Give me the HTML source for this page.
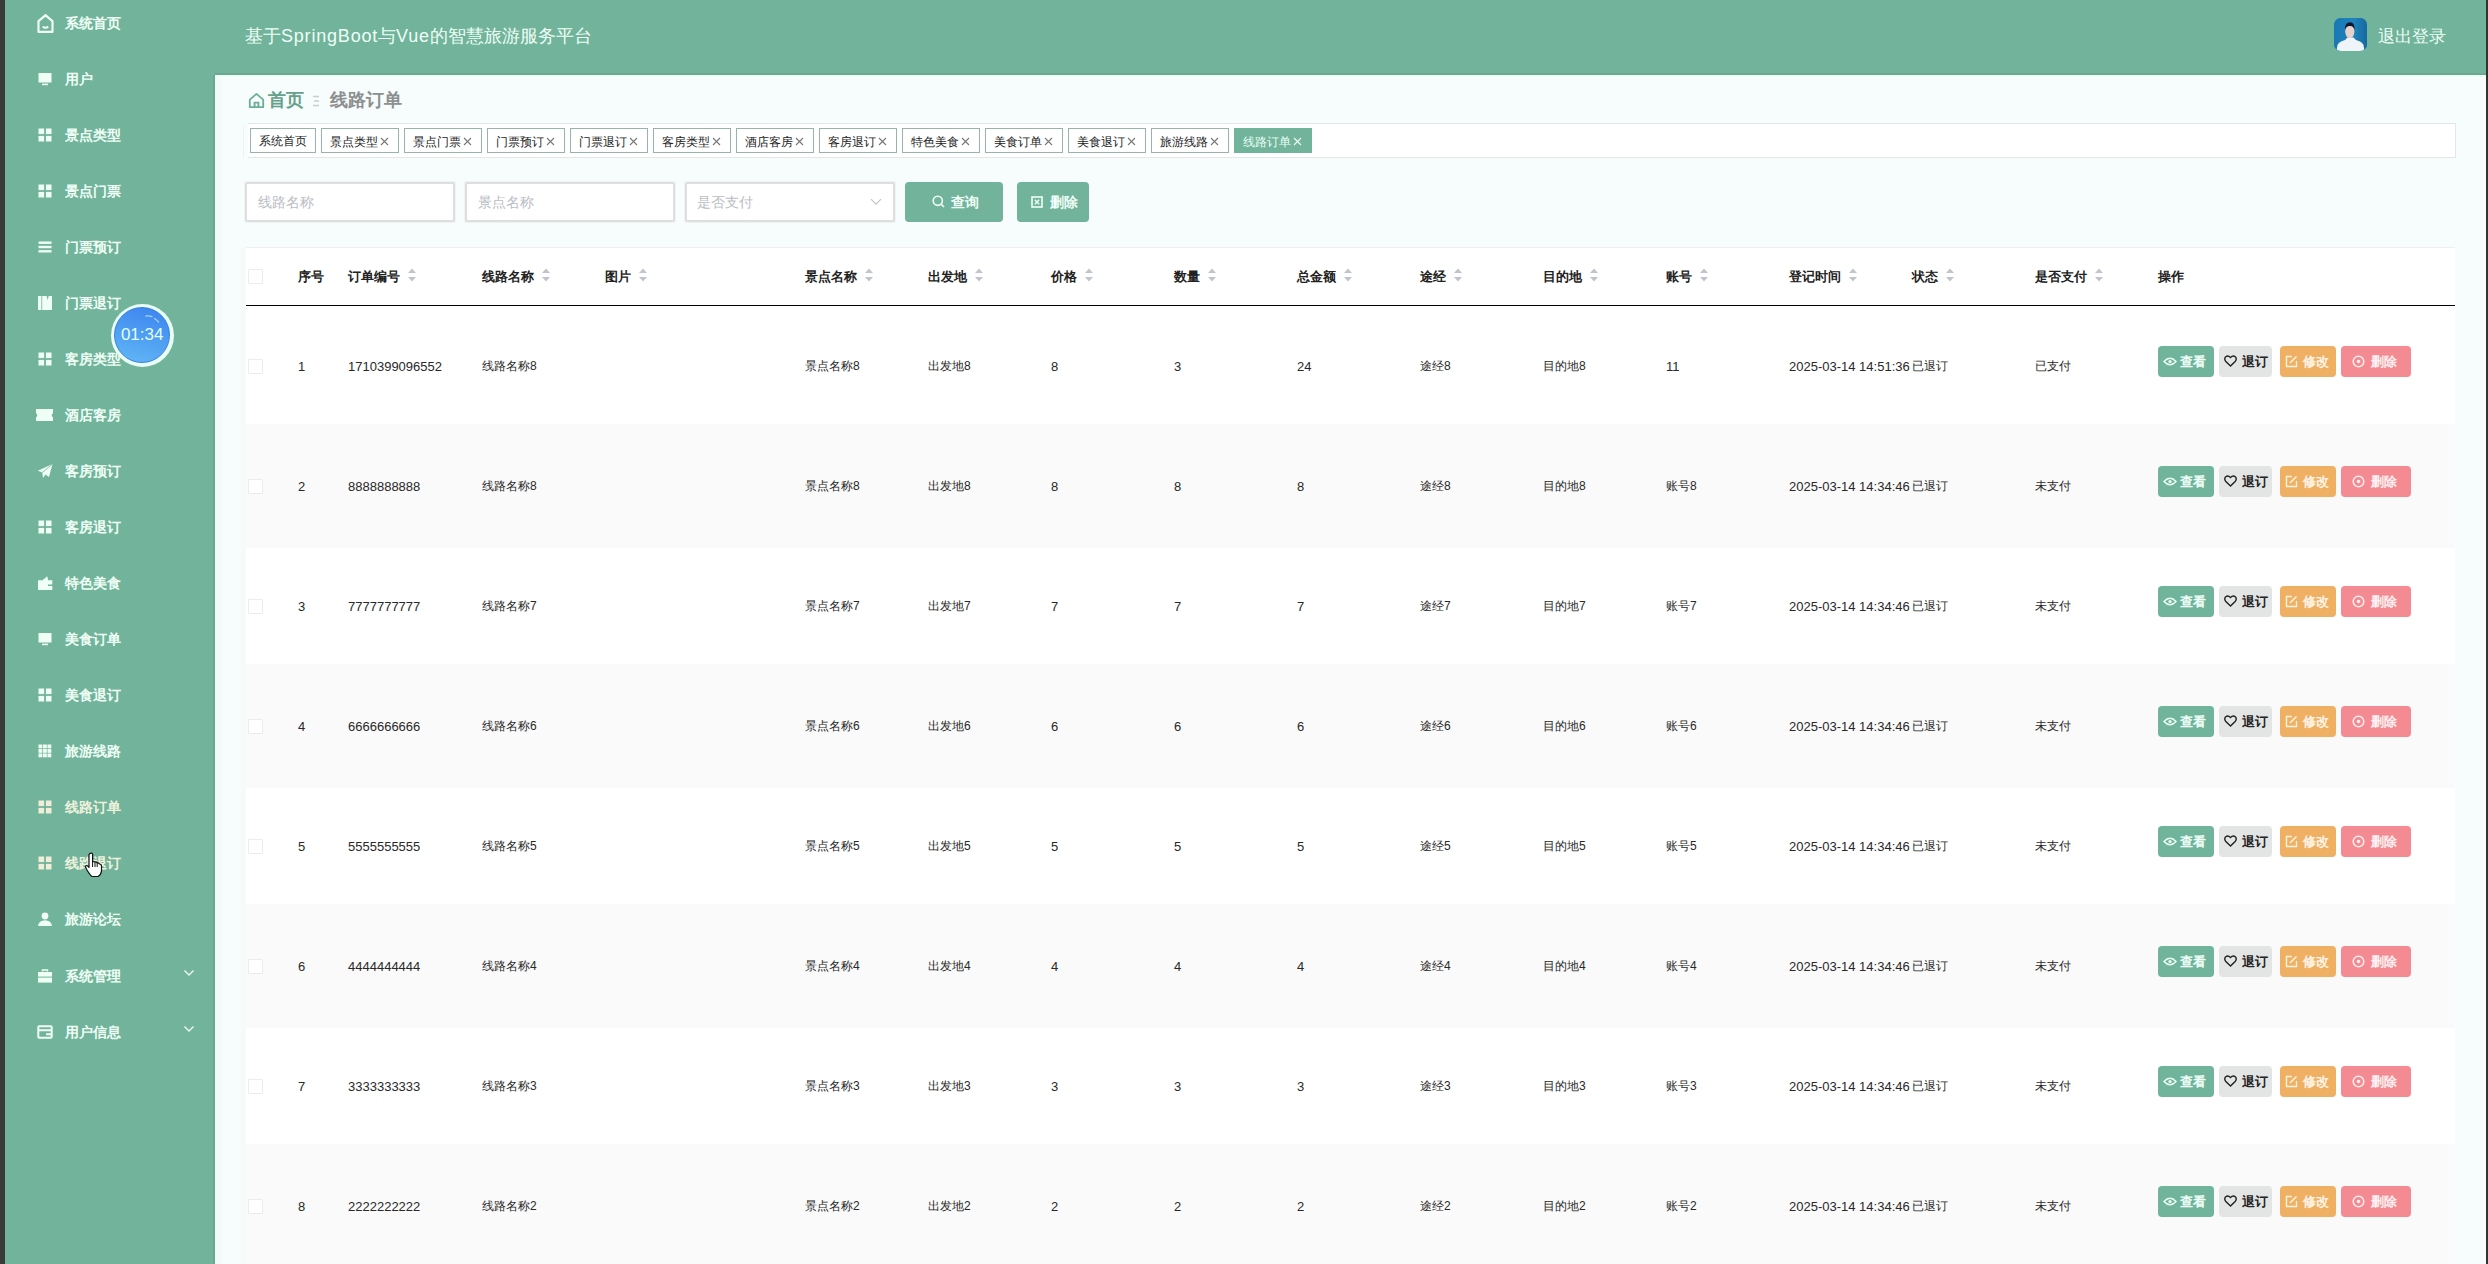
<!DOCTYPE html><html><head><meta charset="utf-8"><style>
*{box-sizing:border-box;margin:0;padding:0}
svg{display:block}
html,body{width:2488px;height:1264px;overflow:hidden}
body{position:relative;background:#f6fcfb;font-family:"Liberation Sans",sans-serif;color:#333}
.a{position:absolute}
.edgeL{left:0;top:0;width:5px;height:1264px;background:#373a38}
.edgeR{left:2486px;top:0;width:2px;height:1264px;background:#333}
.side{left:5px;top:0;width:210px;height:1264px;background:#72b39b}
.head{left:215px;top:0;width:2271px;height:75px;background:#72b39b}
.title{left:245px;top:23px;font-size:18px;color:#eefff6;white-space:nowrap;line-height:26px}
.logout{left:2378px;top:25px;font-size:16.5px;color:#eefff6;white-space:nowrap;line-height:22px}
.avatar{left:2334px;top:18px;width:33px;height:33px;border-radius:7px;overflow:hidden;background:#1b7fb5}
.mi{left:65px;font-size:14px;font-weight:bold;color:#effff6;white-space:nowrap;line-height:16px}
.mi.act{color:#eef2dc}
.ic{left:37px;width:16px;height:16px}
.chev{left:183px;width:12px;height:8px}
.bc{font-size:18px;font-weight:bold;white-space:nowrap;line-height:22px}
.tabs{left:248px;top:123px;width:2208px;height:35px;border:1px solid #e3e8e7;border-left:none;background:#fff}
.tab{top:128px;height:25px;border:1px solid #98b3aa;background:#fff;font-size:12px;color:#222;line-height:25px;white-space:nowrap;padding-left:8px}
.tab .x{font-size:13px;color:#888;margin-left:0px}
.tab.on{background:#72b39b;border-color:#72b39b;color:#e9fff5}
.tab.on .x{color:#e9fff5}
.inp{top:182px;height:40px;border:2px solid #dddfdf;border-radius:2px;box-shadow:0 0 0 1px #f1f3f3;background:#fff;font-size:14px;color:#babdc3;line-height:36px;padding-left:11px;white-space:nowrap}
.btn{top:182px;height:40px;border-radius:4px;background:#72b39b;color:#f0fff8;font-size:14px;line-height:40px;white-space:nowrap}
.tbl{left:246px;top:247px;width:2209px;height:1017px;background:#fff}
.hline{left:246px;top:305px;width:2209px;height:1px;background:#000}
.th{top:269px;font-size:13px;font-weight:bold;color:#222;white-space:nowrap;line-height:16px}
.td{font-size:12px;color:#282828;white-space:nowrap;line-height:16px}
.stripe{left:246px;width:2209px;height:120px;background:#fafafa}
.cb{left:248px;width:15px;height:15px;border:1px solid #ececec;border-radius:1px;background:#fff}
.sort{width:10px;height:16px}
.ob{height:31px;border-radius:4px;font-size:13px;font-weight:bold;line-height:31px;white-space:nowrap;padding-left:6px}
.ob svg{vertical-align:-2px;margin-right:3px}
.clock{left:110.6px;top:303.6px;width:63.2px;height:63.2px;border-radius:50%;background:#e9fdf7;padding:3.6px}
.clock div{position:relative;width:56px;height:56px;border-radius:50%;border:1px solid #3a7fe0;background:linear-gradient(195deg,#3b82f0 0%,#4a98f2 40%,#62b8f5 100%);color:#e2fff6;font-size:17px;text-align:center;line-height:54px}
.td.n{font-size:13px;margin-top:1px}.stripe{height:124px}</style></head><body><div class="a edgeL"></div><div class="a side"></div><div class="a head"></div><div class="a edgeR"></div><div class="a ic" style="top:14px;"><svg width="17" height="19" viewBox="0 0 16 16" preserveAspectRatio="none"><path d="M8 1 L14.6 6 V15 H1.4 V6 Z" fill="none" stroke="#effff6" stroke-width="2" stroke-linejoin="round"/><path d="M5.4 10.6 Q8 12.6 10.6 10.6" fill="none" stroke="#effff6" stroke-width="1.8"/></svg></div><div class="a mi" style="top:15px">系统首页</div><div class="a ic" style="top:71px;"><svg width="16" height="16" viewBox="0 0 16 16" ><rect x="1.5" y="2" width="13" height="9.5" fill="#effff6"/><rect x="5" y="12.6" width="6" height="1.6" fill="#effff6"/></svg></div><div class="a mi" style="top:71px">用户</div><div class="a ic" style="top:127px;"><svg width="16" height="16" viewBox="0 0 16 16" ><rect x="1.5" y="1.5" width="5.6" height="5.6" fill="#effff6"/><rect x="8.9" y="1.5" width="5.6" height="5.6" fill="#effff6"/><rect x="1.5" y="8.9" width="5.6" height="5.6" fill="#effff6"/><rect x="8.9" y="8.9" width="5.6" height="5.6" fill="#effff6"/></svg></div><div class="a mi" style="top:127px">景点类型</div><div class="a ic" style="top:183px;"><svg width="16" height="16" viewBox="0 0 16 16" ><rect x="1.5" y="1.5" width="5.6" height="5.6" fill="#effff6"/><rect x="8.9" y="1.5" width="5.6" height="5.6" fill="#effff6"/><rect x="1.5" y="8.9" width="5.6" height="5.6" fill="#effff6"/><rect x="8.9" y="8.9" width="5.6" height="5.6" fill="#effff6"/></svg></div><div class="a mi" style="top:183px">景点门票</div><div class="a ic" style="top:239px;"><svg width="16" height="16" viewBox="0 0 16 16" ><rect x="1.5" y="2.5" width="13" height="2.4" fill="#effff6"/><rect x="1.5" y="6.8" width="13" height="2.4" fill="#effff6"/><rect x="1.5" y="11.1" width="13" height="2.4" fill="#effff6"/></svg></div><div class="a mi" style="top:239px">门票预订</div><div class="a ic" style="top:295px;"><svg width="16" height="16" viewBox="0 0 16 16" ><rect x="1" y="1" width="3.4" height="14" fill="#effff6"/><path d="M5.2 1 H15 V15 H5.2 Z M9.6 1 L11.6 1 L10.8 5.2 Z" fill="#effff6" fill-rule="evenodd"/></svg></div><div class="a mi" style="top:295px">门票退订</div><div class="a ic" style="top:351px;"><svg width="16" height="16" viewBox="0 0 16 16" ><rect x="1.5" y="1.5" width="5.6" height="5.6" fill="#effff6"/><rect x="8.9" y="1.5" width="5.6" height="5.6" fill="#effff6"/><rect x="1.5" y="8.9" width="5.6" height="5.6" fill="#effff6"/><rect x="8.9" y="8.9" width="5.6" height="5.6" fill="#effff6"/></svg></div><div class="a mi" style="top:351px">客房类型</div><div class="a ic" style="top:407px;left:36px;width:18px"><svg width="17" height="16" viewBox="0 0 17 16" ><path d="M0 2 H17 V6.2 A2.2 2.2 0 0 0 17 10.2 V14 H0 V10.2 A2.2 2.2 0 0 0 0 6.2 Z" fill="#effff6"/></svg></div><div class="a mi" style="top:407px">酒店客房</div><div class="a ic" style="top:463px;"><svg width="16" height="16" viewBox="0 0 16 16" ><path d="M15.5 1 L0.8 7.8 L5.2 9.6 L6 15 L8.6 11.4 L12 14 Z" fill="#effff6"/><path d="M5.2 9.6 L15.5 1" stroke="#72b39b" stroke-width="0.8"/></svg></div><div class="a mi" style="top:463px">客房预订</div><div class="a ic" style="top:519px;"><svg width="16" height="16" viewBox="0 0 16 16" ><rect x="1.5" y="1.5" width="5.6" height="5.6" fill="#effff6"/><rect x="8.9" y="1.5" width="5.6" height="5.6" fill="#effff6"/><rect x="1.5" y="8.9" width="5.6" height="5.6" fill="#effff6"/><rect x="8.9" y="8.9" width="5.6" height="5.6" fill="#effff6"/></svg></div><div class="a mi" style="top:519px">客房退订</div><div class="a ic" style="top:575px;"><svg width="16" height="16" viewBox="0 0 16 16" ><path d="M1 5.2 H5.5 L10.2 1.2 L11.2 5.2 H15.3 V9.6 H11 V11 H15.3 V15 H1 Z" fill="#effff6"/></svg></div><div class="a mi" style="top:575px">特色美食</div><div class="a ic" style="top:631px;"><svg width="16" height="16" viewBox="0 0 16 16" ><rect x="1.5" y="2" width="13" height="9.5" fill="#effff6"/><rect x="5" y="12.6" width="6" height="1.6" fill="#effff6"/></svg></div><div class="a mi" style="top:631px">美食订单</div><div class="a ic" style="top:687px;"><svg width="16" height="16" viewBox="0 0 16 16" ><rect x="1.5" y="1.5" width="5.6" height="5.6" fill="#effff6"/><rect x="8.9" y="1.5" width="5.6" height="5.6" fill="#effff6"/><rect x="1.5" y="8.9" width="5.6" height="5.6" fill="#effff6"/><rect x="8.9" y="8.9" width="5.6" height="5.6" fill="#effff6"/></svg></div><div class="a mi" style="top:687px">美食退订</div><div class="a ic" style="top:743px;"><svg width="16" height="16" viewBox="0 0 16 16" ><rect x="1.5" y="1.5" width="3.8" height="3.8" fill="#effff6"/><rect x="1.5" y="6.0" width="3.8" height="3.8" fill="#effff6"/><rect x="1.5" y="10.5" width="3.8" height="3.8" fill="#effff6"/><rect x="6.0" y="1.5" width="3.8" height="3.8" fill="#effff6"/><rect x="6.0" y="6.0" width="3.8" height="3.8" fill="#effff6"/><rect x="6.0" y="10.5" width="3.8" height="3.8" fill="#effff6"/><rect x="10.5" y="1.5" width="3.8" height="3.8" fill="#effff6"/><rect x="10.5" y="6.0" width="3.8" height="3.8" fill="#effff6"/><rect x="10.5" y="10.5" width="3.8" height="3.8" fill="#effff6"/></svg></div><div class="a mi" style="top:743px">旅游线路</div><div class="a ic" style="top:799px;"><svg width="16" height="16" viewBox="0 0 16 16" ><rect x="1.5" y="1.5" width="5.6" height="5.6" fill="#f1eed8"/><rect x="8.9" y="1.5" width="5.6" height="5.6" fill="#f1eed8"/><rect x="1.5" y="8.9" width="5.6" height="5.6" fill="#f1eed8"/><rect x="8.9" y="8.9" width="5.6" height="5.6" fill="#f1eed8"/></svg></div><div class="a mi act" style="top:799px">线路订单</div><div class="a ic" style="top:855px;"><svg width="16" height="16" viewBox="0 0 16 16" ><rect x="1.5" y="1.5" width="5.6" height="5.6" fill="#f1eed8"/><rect x="8.9" y="1.5" width="5.6" height="5.6" fill="#f1eed8"/><rect x="1.5" y="8.9" width="5.6" height="5.6" fill="#f1eed8"/><rect x="8.9" y="8.9" width="5.6" height="5.6" fill="#f1eed8"/></svg></div><div class="a mi act" style="top:855px">线路退订</div><div class="a ic" style="top:911px;"><svg width="16" height="16" viewBox="0 0 16 16" ><circle cx="8" cy="5" r="3.4" fill="#effff6"/><path d="M1 15 Q1.8 9.5 8 9.3 Q14.2 9.5 15 15 Z" fill="#effff6"/></svg></div><div class="a mi" style="top:911px">旅游论坛</div><div class="a ic" style="top:968px;"><svg width="16" height="16" viewBox="0 0 16 16" ><path d="M5.5 3.5 V2 H10.5 V3.5" fill="none" stroke="#effff6" stroke-width="1.4"/><rect x="1" y="4" width="14" height="4.6" fill="#effff6"/><rect x="1" y="9.6" width="14" height="5" fill="#effff6"/></svg></div><div class="a mi" style="top:968px">系统管理</div><div class="a chev" style="top:969px"><svg width="12" height="8" viewBox="0 0 12 8"><path d="M1.5 1.5 L6 6 L10.5 1.5" fill="none" stroke="#effff6" stroke-width="1.3"/></svg></div><div class="a ic" style="top:1024px;"><svg width="16" height="16" viewBox="0 0 16 16" ><rect x="1.3" y="2.3" width="13.4" height="11.4" rx="1" fill="none" stroke="#effff6" stroke-width="2"/><path d="M1.3 6.2 H14.7 M9 10.2 H14.7" stroke="#effff6" stroke-width="2"/></svg></div><div class="a mi" style="top:1024px">用户信息</div><div class="a chev" style="top:1025px"><svg width="12" height="8" viewBox="0 0 12 8"><path d="M1.5 1.5 L6 6 L10.5 1.5" fill="none" stroke="#effff6" stroke-width="1.3"/></svg></div><div class="a title">基于<span style="letter-spacing:0.8px">SpringBoot</span>与<span style="letter-spacing:0.8px">Vue</span>的智慧旅游服务平台</div><div class="a avatar"><svg width="33" height="33" viewBox="0 0 33 33"><defs><linearGradient id="avg" x1="0" y1="0" x2="1" y2="0"><stop offset="0" stop-color="#1a78b4"/><stop offset="0.6" stop-color="#1f84bd"/><stop offset="1" stop-color="#16679f"/></linearGradient></defs><rect width="33" height="33" fill="url(#avg)"/><path d="M2.5 33 L3.5 27 Q5 23.5 11 22 L13.5 19.5 H19.5 L22 22 Q28 23.5 29.5 27 L30.5 33 Z" fill="#eef4f8"/><ellipse cx="15.8" cy="13.5" rx="4.6" ry="6.6" fill="#e8d3cc"/><path d="M11 12 Q10.6 4.5 16 4.2 Q21 4.5 20.6 12 Q19.5 7.8 16 8 Q12.2 7.8 11 12Z" fill="#101830"/></svg></div><div class="a logout">退出登录</div><div class="a" style="left:215px;top:75px;width:2271px;height:1189px;background:#f7fcfc"></div><div class="a" style="left:213px;top:75px;width:2px;height:1189px;background:#6ca891"></div><div class="a" style="left:215px;top:73px;width:2271px;height:2px;background:#6ca891"></div><div class="a" style="left:215px;top:75px;width:2271px;height:2px;background:#eafff7"></div><div class="a" style="left:215px;top:77px;width:6px;height:1187px;background:#f4faf9"></div><div class="a" style="left:248px;top:92px"><svg width="17" height="17" viewBox="0 0 16 16"><path d="M8 1.8 L14.3 7.2 V14.3 H1.7 V7.2 Z" fill="none" stroke="#6fae96" stroke-width="1.7" stroke-linejoin="round"/><path d="M6.2 14.3 V10 H9.8 V14.3" fill="none" stroke="#6fae96" stroke-width="1.8"/></svg></div><div class="a bc" style="left:268px;top:89px;color:#64a18a">首页</div><div class="a" style="left:312px;top:95px;width:8px;height:12px"><svg width="8" height="12" viewBox="0 0 8 12"><path d="M1 1.5 H7 M2 6 H7 M1 10.5 H7" stroke="#c8cccc" stroke-width="1.3"/></svg></div><div class="a bc" style="left:330px;top:89px;color:#8c8f8f">线路订单</div><div class="a tabs"></div><div class="a" style="left:243px;top:125px;width:1px;height:33px;background:#eef2f1"></div><div class="a tab" style="left:250px;width:66px">系统首页</div><div class="a tab" style="left:321px;width:78px">景点类型<span class="x"><svg style="display:inline-block;vertical-align:0px;margin-left:2px" width="9" height="9" viewBox="0 0 9 9"><path d="M1 1 L8 8 M8 1 L1 8" stroke="#777" stroke-width="1.1"/></svg></span></div><div class="a tab" style="left:404px;width:78px">景点门票<span class="x"><svg style="display:inline-block;vertical-align:0px;margin-left:2px" width="9" height="9" viewBox="0 0 9 9"><path d="M1 1 L8 8 M8 1 L1 8" stroke="#777" stroke-width="1.1"/></svg></span></div><div class="a tab" style="left:487px;width:78px">门票预订<span class="x"><svg style="display:inline-block;vertical-align:0px;margin-left:2px" width="9" height="9" viewBox="0 0 9 9"><path d="M1 1 L8 8 M8 1 L1 8" stroke="#777" stroke-width="1.1"/></svg></span></div><div class="a tab" style="left:570px;width:78px">门票退订<span class="x"><svg style="display:inline-block;vertical-align:0px;margin-left:2px" width="9" height="9" viewBox="0 0 9 9"><path d="M1 1 L8 8 M8 1 L1 8" stroke="#777" stroke-width="1.1"/></svg></span></div><div class="a tab" style="left:653px;width:78px">客房类型<span class="x"><svg style="display:inline-block;vertical-align:0px;margin-left:2px" width="9" height="9" viewBox="0 0 9 9"><path d="M1 1 L8 8 M8 1 L1 8" stroke="#777" stroke-width="1.1"/></svg></span></div><div class="a tab" style="left:736px;width:78px">酒店客房<span class="x"><svg style="display:inline-block;vertical-align:0px;margin-left:2px" width="9" height="9" viewBox="0 0 9 9"><path d="M1 1 L8 8 M8 1 L1 8" stroke="#777" stroke-width="1.1"/></svg></span></div><div class="a tab" style="left:819px;width:78px">客房退订<span class="x"><svg style="display:inline-block;vertical-align:0px;margin-left:2px" width="9" height="9" viewBox="0 0 9 9"><path d="M1 1 L8 8 M8 1 L1 8" stroke="#777" stroke-width="1.1"/></svg></span></div><div class="a tab" style="left:902px;width:78px">特色美食<span class="x"><svg style="display:inline-block;vertical-align:0px;margin-left:2px" width="9" height="9" viewBox="0 0 9 9"><path d="M1 1 L8 8 M8 1 L1 8" stroke="#777" stroke-width="1.1"/></svg></span></div><div class="a tab" style="left:985px;width:78px">美食订单<span class="x"><svg style="display:inline-block;vertical-align:0px;margin-left:2px" width="9" height="9" viewBox="0 0 9 9"><path d="M1 1 L8 8 M8 1 L1 8" stroke="#777" stroke-width="1.1"/></svg></span></div><div class="a tab" style="left:1068px;width:78px">美食退订<span class="x"><svg style="display:inline-block;vertical-align:0px;margin-left:2px" width="9" height="9" viewBox="0 0 9 9"><path d="M1 1 L8 8 M8 1 L1 8" stroke="#777" stroke-width="1.1"/></svg></span></div><div class="a tab" style="left:1151px;width:78px">旅游线路<span class="x"><svg style="display:inline-block;vertical-align:0px;margin-left:2px" width="9" height="9" viewBox="0 0 9 9"><path d="M1 1 L8 8 M8 1 L1 8" stroke="#777" stroke-width="1.1"/></svg></span></div><div class="a tab on" style="left:1234px;width:78px">线路订单<span class="x"><svg style="display:inline-block;vertical-align:0px;margin-left:2px" width="9" height="9" viewBox="0 0 9 9"><path d="M1 1 L8 8 M8 1 L1 8" stroke="#f0fff8" stroke-width="1.1"/></svg></span></div><div class="a inp" style="left:245px;width:210px">线路名称</div><div class="a inp" style="left:465px;width:210px">景点名称</div><div class="a inp" style="left:685px;width:210px;padding-left:10px">是否支付<svg class="a" style="left:183px;top:14px" width="12" height="8" viewBox="0 0 12 8"><path d="M1 1.2 L6 6.2 L11 1.2" fill="none" stroke="#c0c4cc" stroke-width="1.2"/></svg></div><div class="a btn" style="left:905px;width:98px"><svg class="a" style="left:27px;top:13px" width="13" height="13" viewBox="0 0 13 13"><circle cx="5.8" cy="5.8" r="4.6" fill="none" stroke="#f0fff8" stroke-width="1.6"/><path d="M9.2 9.2 L12 12" stroke="#f0fff8" stroke-width="1.6"/></svg><span class="a" style="left:46px;top:0;font-weight:bold">查询</span></div><div class="a btn" style="left:1017px;width:72px;font-weight:bold"><svg class="a" style="left:14px;top:14px" width="12" height="12" viewBox="0 0 12 12"><rect x="1" y="1" width="10" height="10" fill="none" stroke="#f0fff8" stroke-width="1.6"/><path d="M3.8 3.8 L8.2 8.2 M8.2 3.8 L3.8 8.2" stroke="#f0fff8" stroke-width="1.4"/></svg><span class="a" style="left:33px;top:0">删除</span></div><div class="a tbl"></div><div class="a" style="left:241px;top:247px;width:5px;height:1017px;background:#f8f9f9"></div><div class="a" style="left:246px;top:247px;width:2209px;height:1px;background:#eef0f0"></div><div class="a stripe" style="top:424px"></div><div class="a stripe" style="top:664px"></div><div class="a stripe" style="top:904px"></div><div class="a stripe" style="top:1144px"></div><div class="a hline"></div><div class="a cb" style="top:269px"></div><div class="a th" style="left:298px">序号</div><div class="a th" style="left:348px">订单编号<span style="position:absolute;left:100%;margin-left:7px;top:-2px"><svg width="10" height="16" viewBox="0 0 10 16"><path d="M5 1.5 L9 6 H1 Z" fill="#c0c4cc"/><path d="M5 14.5 L9 10 H1 Z" fill="#c0c4cc"/></svg></span></div><div class="a th" style="left:482px">线路名称<span style="position:absolute;left:100%;margin-left:7px;top:-2px"><svg width="10" height="16" viewBox="0 0 10 16"><path d="M5 1.5 L9 6 H1 Z" fill="#c0c4cc"/><path d="M5 14.5 L9 10 H1 Z" fill="#c0c4cc"/></svg></span></div><div class="a th" style="left:605px">图片<span style="position:absolute;left:100%;margin-left:7px;top:-2px"><svg width="10" height="16" viewBox="0 0 10 16"><path d="M5 1.5 L9 6 H1 Z" fill="#c0c4cc"/><path d="M5 14.5 L9 10 H1 Z" fill="#c0c4cc"/></svg></span></div><div class="a th" style="left:805px">景点名称<span style="position:absolute;left:100%;margin-left:7px;top:-2px"><svg width="10" height="16" viewBox="0 0 10 16"><path d="M5 1.5 L9 6 H1 Z" fill="#c0c4cc"/><path d="M5 14.5 L9 10 H1 Z" fill="#c0c4cc"/></svg></span></div><div class="a th" style="left:928px">出发地<span style="position:absolute;left:100%;margin-left:7px;top:-2px"><svg width="10" height="16" viewBox="0 0 10 16"><path d="M5 1.5 L9 6 H1 Z" fill="#c0c4cc"/><path d="M5 14.5 L9 10 H1 Z" fill="#c0c4cc"/></svg></span></div><div class="a th" style="left:1051px">价格<span style="position:absolute;left:100%;margin-left:7px;top:-2px"><svg width="10" height="16" viewBox="0 0 10 16"><path d="M5 1.5 L9 6 H1 Z" fill="#c0c4cc"/><path d="M5 14.5 L9 10 H1 Z" fill="#c0c4cc"/></svg></span></div><div class="a th" style="left:1174px">数量<span style="position:absolute;left:100%;margin-left:7px;top:-2px"><svg width="10" height="16" viewBox="0 0 10 16"><path d="M5 1.5 L9 6 H1 Z" fill="#c0c4cc"/><path d="M5 14.5 L9 10 H1 Z" fill="#c0c4cc"/></svg></span></div><div class="a th" style="left:1297px">总金额<span style="position:absolute;left:100%;margin-left:7px;top:-2px"><svg width="10" height="16" viewBox="0 0 10 16"><path d="M5 1.5 L9 6 H1 Z" fill="#c0c4cc"/><path d="M5 14.5 L9 10 H1 Z" fill="#c0c4cc"/></svg></span></div><div class="a th" style="left:1420px">途经<span style="position:absolute;left:100%;margin-left:7px;top:-2px"><svg width="10" height="16" viewBox="0 0 10 16"><path d="M5 1.5 L9 6 H1 Z" fill="#c0c4cc"/><path d="M5 14.5 L9 10 H1 Z" fill="#c0c4cc"/></svg></span></div><div class="a th" style="left:1543px">目的地<span style="position:absolute;left:100%;margin-left:7px;top:-2px"><svg width="10" height="16" viewBox="0 0 10 16"><path d="M5 1.5 L9 6 H1 Z" fill="#c0c4cc"/><path d="M5 14.5 L9 10 H1 Z" fill="#c0c4cc"/></svg></span></div><div class="a th" style="left:1666px">账号<span style="position:absolute;left:100%;margin-left:7px;top:-2px"><svg width="10" height="16" viewBox="0 0 10 16"><path d="M5 1.5 L9 6 H1 Z" fill="#c0c4cc"/><path d="M5 14.5 L9 10 H1 Z" fill="#c0c4cc"/></svg></span></div><div class="a th" style="left:1789px">登记时间<span style="position:absolute;left:100%;margin-left:7px;top:-2px"><svg width="10" height="16" viewBox="0 0 10 16"><path d="M5 1.5 L9 6 H1 Z" fill="#c0c4cc"/><path d="M5 14.5 L9 10 H1 Z" fill="#c0c4cc"/></svg></span></div><div class="a th" style="left:1912px">状态<span style="position:absolute;left:100%;margin-left:7px;top:-2px"><svg width="10" height="16" viewBox="0 0 10 16"><path d="M5 1.5 L9 6 H1 Z" fill="#c0c4cc"/><path d="M5 14.5 L9 10 H1 Z" fill="#c0c4cc"/></svg></span></div><div class="a th" style="left:2035px">是否支付<span style="position:absolute;left:100%;margin-left:7px;top:-2px"><svg width="10" height="16" viewBox="0 0 10 16"><path d="M5 1.5 L9 6 H1 Z" fill="#c0c4cc"/><path d="M5 14.5 L9 10 H1 Z" fill="#c0c4cc"/></svg></span></div><div class="a th" style="left:2158px">操作</div><div class="a cb" style="top:358.5px"></div><div class="a td n" style="left:298px;top:358.0px">1</div><div class="a td n" style="left:348px;top:358.0px">1710399096552</div><div class="a td" style="left:482px;top:358.0px">线路名称8</div><div class="a td" style="left:805px;top:358.0px">景点名称8</div><div class="a td" style="left:928px;top:358.0px">出发地8</div><div class="a td n" style="left:1051px;top:358.0px">8</div><div class="a td n" style="left:1174px;top:358.0px">3</div><div class="a td n" style="left:1297px;top:358.0px">24</div><div class="a td" style="left:1420px;top:358.0px">途经8</div><div class="a td" style="left:1543px;top:358.0px">目的地8</div><div class="a td n" style="left:1666px;top:358.0px">11</div><div class="a td n" style="left:1789px;top:358.0px">2025-03-14 14:51:36</div><div class="a td" style="left:1912px;top:358.0px">已退订</div><div class="a td" style="left:2035px;top:358.0px">已支付</div><div class="a" style="left:0;top:345.5px;width:0;height:0"><div class="a ob" style="left:2158px;width:56px;background:#6fb49b;color:#effff7"><svg class="a" style="left:5px;top:10px" width="14" height="11" viewBox="0 0 14 11"><path d="M1 5.5 Q7 -1 13 5.5 Q7 12 1 5.5 Z" fill="none" stroke="#eefff7" stroke-width="1.5"/><circle cx="7" cy="5.5" r="1.6" fill="#eefff7"/></svg><span class="a" style="left:22px;top:0">查看</span></div><div class="a ob" style="left:2219px;width:53px;background:#e3e4e4;color:#222"><svg class="a" style="left:5px;top:9px" width="13" height="12" viewBox="0 0 13 12"><path d="M6.5 11 L1.6 6.2 Q-0.2 3.8 1.8 1.8 Q4 0 6.5 2.6 Q9 0 11.2 1.8 Q13.2 3.8 11.4 6.2 Z" fill="none" stroke="#222" stroke-width="1.4"/></svg><span class="a" style="left:23px;top:0">退订</span></div><div class="a ob" style="left:2280px;width:56px;background:#f0b064;color:#fff4e4"><svg class="a" style="left:5px;top:9px" width="13" height="13" viewBox="0 0 13 13"><path d="M7 1.5 H1.5 V11.5 H11.5 V6" fill="none" stroke="#fff3e0" stroke-width="1.4"/><path d="M5 8 L11.5 1.5" stroke="#fff3e0" stroke-width="1.6"/></svg><span class="a" style="left:23px;top:0">修改</span></div><div class="a ob" style="left:2341px;width:70px;background:#f58b92;color:#fff2f2"><svg class="a" style="left:11px;top:9px" width="13" height="13" viewBox="0 0 13 13"><circle cx="6.5" cy="6.5" r="5.3" fill="none" stroke="#fff0f0" stroke-width="1.5"/><circle cx="6.5" cy="6.5" r="1.8" fill="#fff0f0"/></svg><span class="a" style="left:30px;top:0">删除</span></div></div><div class="a cb" style="top:478.5px"></div><div class="a td n" style="left:298px;top:478.0px">2</div><div class="a td n" style="left:348px;top:478.0px">8888888888</div><div class="a td" style="left:482px;top:478.0px">线路名称8</div><div class="a td" style="left:805px;top:478.0px">景点名称8</div><div class="a td" style="left:928px;top:478.0px">出发地8</div><div class="a td n" style="left:1051px;top:478.0px">8</div><div class="a td n" style="left:1174px;top:478.0px">8</div><div class="a td n" style="left:1297px;top:478.0px">8</div><div class="a td" style="left:1420px;top:478.0px">途经8</div><div class="a td" style="left:1543px;top:478.0px">目的地8</div><div class="a td" style="left:1666px;top:478.0px">账号8</div><div class="a td n" style="left:1789px;top:478.0px">2025-03-14 14:34:46</div><div class="a td" style="left:1912px;top:478.0px">已退订</div><div class="a td" style="left:2035px;top:478.0px">未支付</div><div class="a" style="left:0;top:465.5px;width:0;height:0"><div class="a ob" style="left:2158px;width:56px;background:#6fb49b;color:#effff7"><svg class="a" style="left:5px;top:10px" width="14" height="11" viewBox="0 0 14 11"><path d="M1 5.5 Q7 -1 13 5.5 Q7 12 1 5.5 Z" fill="none" stroke="#eefff7" stroke-width="1.5"/><circle cx="7" cy="5.5" r="1.6" fill="#eefff7"/></svg><span class="a" style="left:22px;top:0">查看</span></div><div class="a ob" style="left:2219px;width:53px;background:#e3e4e4;color:#222"><svg class="a" style="left:5px;top:9px" width="13" height="12" viewBox="0 0 13 12"><path d="M6.5 11 L1.6 6.2 Q-0.2 3.8 1.8 1.8 Q4 0 6.5 2.6 Q9 0 11.2 1.8 Q13.2 3.8 11.4 6.2 Z" fill="none" stroke="#222" stroke-width="1.4"/></svg><span class="a" style="left:23px;top:0">退订</span></div><div class="a ob" style="left:2280px;width:56px;background:#f0b064;color:#fff4e4"><svg class="a" style="left:5px;top:9px" width="13" height="13" viewBox="0 0 13 13"><path d="M7 1.5 H1.5 V11.5 H11.5 V6" fill="none" stroke="#fff3e0" stroke-width="1.4"/><path d="M5 8 L11.5 1.5" stroke="#fff3e0" stroke-width="1.6"/></svg><span class="a" style="left:23px;top:0">修改</span></div><div class="a ob" style="left:2341px;width:70px;background:#f58b92;color:#fff2f2"><svg class="a" style="left:11px;top:9px" width="13" height="13" viewBox="0 0 13 13"><circle cx="6.5" cy="6.5" r="5.3" fill="none" stroke="#fff0f0" stroke-width="1.5"/><circle cx="6.5" cy="6.5" r="1.8" fill="#fff0f0"/></svg><span class="a" style="left:30px;top:0">删除</span></div></div><div class="a cb" style="top:598.5px"></div><div class="a td n" style="left:298px;top:598.0px">3</div><div class="a td n" style="left:348px;top:598.0px">7777777777</div><div class="a td" style="left:482px;top:598.0px">线路名称7</div><div class="a td" style="left:805px;top:598.0px">景点名称7</div><div class="a td" style="left:928px;top:598.0px">出发地7</div><div class="a td n" style="left:1051px;top:598.0px">7</div><div class="a td n" style="left:1174px;top:598.0px">7</div><div class="a td n" style="left:1297px;top:598.0px">7</div><div class="a td" style="left:1420px;top:598.0px">途经7</div><div class="a td" style="left:1543px;top:598.0px">目的地7</div><div class="a td" style="left:1666px;top:598.0px">账号7</div><div class="a td n" style="left:1789px;top:598.0px">2025-03-14 14:34:46</div><div class="a td" style="left:1912px;top:598.0px">已退订</div><div class="a td" style="left:2035px;top:598.0px">未支付</div><div class="a" style="left:0;top:585.5px;width:0;height:0"><div class="a ob" style="left:2158px;width:56px;background:#6fb49b;color:#effff7"><svg class="a" style="left:5px;top:10px" width="14" height="11" viewBox="0 0 14 11"><path d="M1 5.5 Q7 -1 13 5.5 Q7 12 1 5.5 Z" fill="none" stroke="#eefff7" stroke-width="1.5"/><circle cx="7" cy="5.5" r="1.6" fill="#eefff7"/></svg><span class="a" style="left:22px;top:0">查看</span></div><div class="a ob" style="left:2219px;width:53px;background:#e3e4e4;color:#222"><svg class="a" style="left:5px;top:9px" width="13" height="12" viewBox="0 0 13 12"><path d="M6.5 11 L1.6 6.2 Q-0.2 3.8 1.8 1.8 Q4 0 6.5 2.6 Q9 0 11.2 1.8 Q13.2 3.8 11.4 6.2 Z" fill="none" stroke="#222" stroke-width="1.4"/></svg><span class="a" style="left:23px;top:0">退订</span></div><div class="a ob" style="left:2280px;width:56px;background:#f0b064;color:#fff4e4"><svg class="a" style="left:5px;top:9px" width="13" height="13" viewBox="0 0 13 13"><path d="M7 1.5 H1.5 V11.5 H11.5 V6" fill="none" stroke="#fff3e0" stroke-width="1.4"/><path d="M5 8 L11.5 1.5" stroke="#fff3e0" stroke-width="1.6"/></svg><span class="a" style="left:23px;top:0">修改</span></div><div class="a ob" style="left:2341px;width:70px;background:#f58b92;color:#fff2f2"><svg class="a" style="left:11px;top:9px" width="13" height="13" viewBox="0 0 13 13"><circle cx="6.5" cy="6.5" r="5.3" fill="none" stroke="#fff0f0" stroke-width="1.5"/><circle cx="6.5" cy="6.5" r="1.8" fill="#fff0f0"/></svg><span class="a" style="left:30px;top:0">删除</span></div></div><div class="a cb" style="top:718.5px"></div><div class="a td n" style="left:298px;top:718.0px">4</div><div class="a td n" style="left:348px;top:718.0px">6666666666</div><div class="a td" style="left:482px;top:718.0px">线路名称6</div><div class="a td" style="left:805px;top:718.0px">景点名称6</div><div class="a td" style="left:928px;top:718.0px">出发地6</div><div class="a td n" style="left:1051px;top:718.0px">6</div><div class="a td n" style="left:1174px;top:718.0px">6</div><div class="a td n" style="left:1297px;top:718.0px">6</div><div class="a td" style="left:1420px;top:718.0px">途经6</div><div class="a td" style="left:1543px;top:718.0px">目的地6</div><div class="a td" style="left:1666px;top:718.0px">账号6</div><div class="a td n" style="left:1789px;top:718.0px">2025-03-14 14:34:46</div><div class="a td" style="left:1912px;top:718.0px">已退订</div><div class="a td" style="left:2035px;top:718.0px">未支付</div><div class="a" style="left:0;top:705.5px;width:0;height:0"><div class="a ob" style="left:2158px;width:56px;background:#6fb49b;color:#effff7"><svg class="a" style="left:5px;top:10px" width="14" height="11" viewBox="0 0 14 11"><path d="M1 5.5 Q7 -1 13 5.5 Q7 12 1 5.5 Z" fill="none" stroke="#eefff7" stroke-width="1.5"/><circle cx="7" cy="5.5" r="1.6" fill="#eefff7"/></svg><span class="a" style="left:22px;top:0">查看</span></div><div class="a ob" style="left:2219px;width:53px;background:#e3e4e4;color:#222"><svg class="a" style="left:5px;top:9px" width="13" height="12" viewBox="0 0 13 12"><path d="M6.5 11 L1.6 6.2 Q-0.2 3.8 1.8 1.8 Q4 0 6.5 2.6 Q9 0 11.2 1.8 Q13.2 3.8 11.4 6.2 Z" fill="none" stroke="#222" stroke-width="1.4"/></svg><span class="a" style="left:23px;top:0">退订</span></div><div class="a ob" style="left:2280px;width:56px;background:#f0b064;color:#fff4e4"><svg class="a" style="left:5px;top:9px" width="13" height="13" viewBox="0 0 13 13"><path d="M7 1.5 H1.5 V11.5 H11.5 V6" fill="none" stroke="#fff3e0" stroke-width="1.4"/><path d="M5 8 L11.5 1.5" stroke="#fff3e0" stroke-width="1.6"/></svg><span class="a" style="left:23px;top:0">修改</span></div><div class="a ob" style="left:2341px;width:70px;background:#f58b92;color:#fff2f2"><svg class="a" style="left:11px;top:9px" width="13" height="13" viewBox="0 0 13 13"><circle cx="6.5" cy="6.5" r="5.3" fill="none" stroke="#fff0f0" stroke-width="1.5"/><circle cx="6.5" cy="6.5" r="1.8" fill="#fff0f0"/></svg><span class="a" style="left:30px;top:0">删除</span></div></div><div class="a cb" style="top:838.5px"></div><div class="a td n" style="left:298px;top:838.0px">5</div><div class="a td n" style="left:348px;top:838.0px">5555555555</div><div class="a td" style="left:482px;top:838.0px">线路名称5</div><div class="a td" style="left:805px;top:838.0px">景点名称5</div><div class="a td" style="left:928px;top:838.0px">出发地5</div><div class="a td n" style="left:1051px;top:838.0px">5</div><div class="a td n" style="left:1174px;top:838.0px">5</div><div class="a td n" style="left:1297px;top:838.0px">5</div><div class="a td" style="left:1420px;top:838.0px">途经5</div><div class="a td" style="left:1543px;top:838.0px">目的地5</div><div class="a td" style="left:1666px;top:838.0px">账号5</div><div class="a td n" style="left:1789px;top:838.0px">2025-03-14 14:34:46</div><div class="a td" style="left:1912px;top:838.0px">已退订</div><div class="a td" style="left:2035px;top:838.0px">未支付</div><div class="a" style="left:0;top:825.5px;width:0;height:0"><div class="a ob" style="left:2158px;width:56px;background:#6fb49b;color:#effff7"><svg class="a" style="left:5px;top:10px" width="14" height="11" viewBox="0 0 14 11"><path d="M1 5.5 Q7 -1 13 5.5 Q7 12 1 5.5 Z" fill="none" stroke="#eefff7" stroke-width="1.5"/><circle cx="7" cy="5.5" r="1.6" fill="#eefff7"/></svg><span class="a" style="left:22px;top:0">查看</span></div><div class="a ob" style="left:2219px;width:53px;background:#e3e4e4;color:#222"><svg class="a" style="left:5px;top:9px" width="13" height="12" viewBox="0 0 13 12"><path d="M6.5 11 L1.6 6.2 Q-0.2 3.8 1.8 1.8 Q4 0 6.5 2.6 Q9 0 11.2 1.8 Q13.2 3.8 11.4 6.2 Z" fill="none" stroke="#222" stroke-width="1.4"/></svg><span class="a" style="left:23px;top:0">退订</span></div><div class="a ob" style="left:2280px;width:56px;background:#f0b064;color:#fff4e4"><svg class="a" style="left:5px;top:9px" width="13" height="13" viewBox="0 0 13 13"><path d="M7 1.5 H1.5 V11.5 H11.5 V6" fill="none" stroke="#fff3e0" stroke-width="1.4"/><path d="M5 8 L11.5 1.5" stroke="#fff3e0" stroke-width="1.6"/></svg><span class="a" style="left:23px;top:0">修改</span></div><div class="a ob" style="left:2341px;width:70px;background:#f58b92;color:#fff2f2"><svg class="a" style="left:11px;top:9px" width="13" height="13" viewBox="0 0 13 13"><circle cx="6.5" cy="6.5" r="5.3" fill="none" stroke="#fff0f0" stroke-width="1.5"/><circle cx="6.5" cy="6.5" r="1.8" fill="#fff0f0"/></svg><span class="a" style="left:30px;top:0">删除</span></div></div><div class="a cb" style="top:958.5px"></div><div class="a td n" style="left:298px;top:958.0px">6</div><div class="a td n" style="left:348px;top:958.0px">4444444444</div><div class="a td" style="left:482px;top:958.0px">线路名称4</div><div class="a td" style="left:805px;top:958.0px">景点名称4</div><div class="a td" style="left:928px;top:958.0px">出发地4</div><div class="a td n" style="left:1051px;top:958.0px">4</div><div class="a td n" style="left:1174px;top:958.0px">4</div><div class="a td n" style="left:1297px;top:958.0px">4</div><div class="a td" style="left:1420px;top:958.0px">途经4</div><div class="a td" style="left:1543px;top:958.0px">目的地4</div><div class="a td" style="left:1666px;top:958.0px">账号4</div><div class="a td n" style="left:1789px;top:958.0px">2025-03-14 14:34:46</div><div class="a td" style="left:1912px;top:958.0px">已退订</div><div class="a td" style="left:2035px;top:958.0px">未支付</div><div class="a" style="left:0;top:945.5px;width:0;height:0"><div class="a ob" style="left:2158px;width:56px;background:#6fb49b;color:#effff7"><svg class="a" style="left:5px;top:10px" width="14" height="11" viewBox="0 0 14 11"><path d="M1 5.5 Q7 -1 13 5.5 Q7 12 1 5.5 Z" fill="none" stroke="#eefff7" stroke-width="1.5"/><circle cx="7" cy="5.5" r="1.6" fill="#eefff7"/></svg><span class="a" style="left:22px;top:0">查看</span></div><div class="a ob" style="left:2219px;width:53px;background:#e3e4e4;color:#222"><svg class="a" style="left:5px;top:9px" width="13" height="12" viewBox="0 0 13 12"><path d="M6.5 11 L1.6 6.2 Q-0.2 3.8 1.8 1.8 Q4 0 6.5 2.6 Q9 0 11.2 1.8 Q13.2 3.8 11.4 6.2 Z" fill="none" stroke="#222" stroke-width="1.4"/></svg><span class="a" style="left:23px;top:0">退订</span></div><div class="a ob" style="left:2280px;width:56px;background:#f0b064;color:#fff4e4"><svg class="a" style="left:5px;top:9px" width="13" height="13" viewBox="0 0 13 13"><path d="M7 1.5 H1.5 V11.5 H11.5 V6" fill="none" stroke="#fff3e0" stroke-width="1.4"/><path d="M5 8 L11.5 1.5" stroke="#fff3e0" stroke-width="1.6"/></svg><span class="a" style="left:23px;top:0">修改</span></div><div class="a ob" style="left:2341px;width:70px;background:#f58b92;color:#fff2f2"><svg class="a" style="left:11px;top:9px" width="13" height="13" viewBox="0 0 13 13"><circle cx="6.5" cy="6.5" r="5.3" fill="none" stroke="#fff0f0" stroke-width="1.5"/><circle cx="6.5" cy="6.5" r="1.8" fill="#fff0f0"/></svg><span class="a" style="left:30px;top:0">删除</span></div></div><div class="a cb" style="top:1078.5px"></div><div class="a td n" style="left:298px;top:1078.0px">7</div><div class="a td n" style="left:348px;top:1078.0px">3333333333</div><div class="a td" style="left:482px;top:1078.0px">线路名称3</div><div class="a td" style="left:805px;top:1078.0px">景点名称3</div><div class="a td" style="left:928px;top:1078.0px">出发地3</div><div class="a td n" style="left:1051px;top:1078.0px">3</div><div class="a td n" style="left:1174px;top:1078.0px">3</div><div class="a td n" style="left:1297px;top:1078.0px">3</div><div class="a td" style="left:1420px;top:1078.0px">途经3</div><div class="a td" style="left:1543px;top:1078.0px">目的地3</div><div class="a td" style="left:1666px;top:1078.0px">账号3</div><div class="a td n" style="left:1789px;top:1078.0px">2025-03-14 14:34:46</div><div class="a td" style="left:1912px;top:1078.0px">已退订</div><div class="a td" style="left:2035px;top:1078.0px">未支付</div><div class="a" style="left:0;top:1065.5px;width:0;height:0"><div class="a ob" style="left:2158px;width:56px;background:#6fb49b;color:#effff7"><svg class="a" style="left:5px;top:10px" width="14" height="11" viewBox="0 0 14 11"><path d="M1 5.5 Q7 -1 13 5.5 Q7 12 1 5.5 Z" fill="none" stroke="#eefff7" stroke-width="1.5"/><circle cx="7" cy="5.5" r="1.6" fill="#eefff7"/></svg><span class="a" style="left:22px;top:0">查看</span></div><div class="a ob" style="left:2219px;width:53px;background:#e3e4e4;color:#222"><svg class="a" style="left:5px;top:9px" width="13" height="12" viewBox="0 0 13 12"><path d="M6.5 11 L1.6 6.2 Q-0.2 3.8 1.8 1.8 Q4 0 6.5 2.6 Q9 0 11.2 1.8 Q13.2 3.8 11.4 6.2 Z" fill="none" stroke="#222" stroke-width="1.4"/></svg><span class="a" style="left:23px;top:0">退订</span></div><div class="a ob" style="left:2280px;width:56px;background:#f0b064;color:#fff4e4"><svg class="a" style="left:5px;top:9px" width="13" height="13" viewBox="0 0 13 13"><path d="M7 1.5 H1.5 V11.5 H11.5 V6" fill="none" stroke="#fff3e0" stroke-width="1.4"/><path d="M5 8 L11.5 1.5" stroke="#fff3e0" stroke-width="1.6"/></svg><span class="a" style="left:23px;top:0">修改</span></div><div class="a ob" style="left:2341px;width:70px;background:#f58b92;color:#fff2f2"><svg class="a" style="left:11px;top:9px" width="13" height="13" viewBox="0 0 13 13"><circle cx="6.5" cy="6.5" r="5.3" fill="none" stroke="#fff0f0" stroke-width="1.5"/><circle cx="6.5" cy="6.5" r="1.8" fill="#fff0f0"/></svg><span class="a" style="left:30px;top:0">删除</span></div></div><div class="a cb" style="top:1198.5px"></div><div class="a td n" style="left:298px;top:1198.0px">8</div><div class="a td n" style="left:348px;top:1198.0px">2222222222</div><div class="a td" style="left:482px;top:1198.0px">线路名称2</div><div class="a td" style="left:805px;top:1198.0px">景点名称2</div><div class="a td" style="left:928px;top:1198.0px">出发地2</div><div class="a td n" style="left:1051px;top:1198.0px">2</div><div class="a td n" style="left:1174px;top:1198.0px">2</div><div class="a td n" style="left:1297px;top:1198.0px">2</div><div class="a td" style="left:1420px;top:1198.0px">途经2</div><div class="a td" style="left:1543px;top:1198.0px">目的地2</div><div class="a td" style="left:1666px;top:1198.0px">账号2</div><div class="a td n" style="left:1789px;top:1198.0px">2025-03-14 14:34:46</div><div class="a td" style="left:1912px;top:1198.0px">已退订</div><div class="a td" style="left:2035px;top:1198.0px">未支付</div><div class="a" style="left:0;top:1185.5px;width:0;height:0"><div class="a ob" style="left:2158px;width:56px;background:#6fb49b;color:#effff7"><svg class="a" style="left:5px;top:10px" width="14" height="11" viewBox="0 0 14 11"><path d="M1 5.5 Q7 -1 13 5.5 Q7 12 1 5.5 Z" fill="none" stroke="#eefff7" stroke-width="1.5"/><circle cx="7" cy="5.5" r="1.6" fill="#eefff7"/></svg><span class="a" style="left:22px;top:0">查看</span></div><div class="a ob" style="left:2219px;width:53px;background:#e3e4e4;color:#222"><svg class="a" style="left:5px;top:9px" width="13" height="12" viewBox="0 0 13 12"><path d="M6.5 11 L1.6 6.2 Q-0.2 3.8 1.8 1.8 Q4 0 6.5 2.6 Q9 0 11.2 1.8 Q13.2 3.8 11.4 6.2 Z" fill="none" stroke="#222" stroke-width="1.4"/></svg><span class="a" style="left:23px;top:0">退订</span></div><div class="a ob" style="left:2280px;width:56px;background:#f0b064;color:#fff4e4"><svg class="a" style="left:5px;top:9px" width="13" height="13" viewBox="0 0 13 13"><path d="M7 1.5 H1.5 V11.5 H11.5 V6" fill="none" stroke="#fff3e0" stroke-width="1.4"/><path d="M5 8 L11.5 1.5" stroke="#fff3e0" stroke-width="1.6"/></svg><span class="a" style="left:23px;top:0">修改</span></div><div class="a ob" style="left:2341px;width:70px;background:#f58b92;color:#fff2f2"><svg class="a" style="left:11px;top:9px" width="13" height="13" viewBox="0 0 13 13"><circle cx="6.5" cy="6.5" r="5.3" fill="none" stroke="#fff0f0" stroke-width="1.5"/><circle cx="6.5" cy="6.5" r="1.8" fill="#fff0f0"/></svg><span class="a" style="left:30px;top:0">删除</span></div></div><div class="a clock"><div>01:34<svg style="position:absolute;left:0;top:0" width="54" height="54" viewBox="0 0 54 54"><path d="M31 8 Q34 7.6 37 8.6" stroke="#a9d2fb" stroke-width="1.3" fill="none" stroke-linecap="round"/><path d="M39.5 10.5 Q42 12 43.5 14" stroke="#a9d2fb" stroke-width="1.3" fill="none" stroke-linecap="round"/></svg></div></div><div class="a" style="left:84px;top:852px"><svg width="20" height="26" viewBox="0 0 20 26"><path d="M6 1.5 Q7.8 0.5 8.6 2 V10 Q10 9 11 10 Q12.5 9.5 13.2 11 Q14.8 10.5 15.5 12 Q17.5 12 17.5 14.5 V19 Q17 23 14 24.5 H8 Q6 23 3 18 L1.5 15 Q1.2 13.5 2.8 13.5 Q4 14 5 15.5 V2.8 Q5.2 2 6 1.5 Z" fill="#fff" stroke="#111" stroke-width="1.2" stroke-linejoin="round"/><path d="M8.6 10 V15 M11 10 V15 M13.2 11 V15" stroke="#111" stroke-width="1"/></svg></div></body></html>
